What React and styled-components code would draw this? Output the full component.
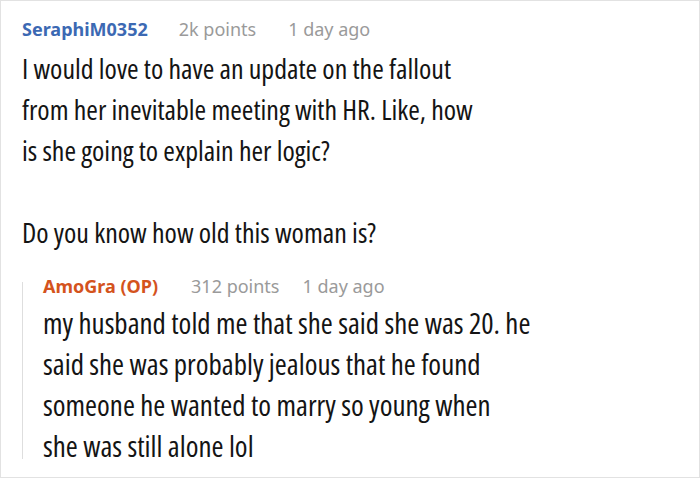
import React from "react";
import styled, { createGlobalStyle } from "styled-components";

const GlobalStyle = createGlobalStyle`
  html, body { margin: 0; padding: 0; background: #ffffff; }
  body { font-family: "Noto Sans", "Open Sans", sans-serif; }
`;

const Frame = styled.div`
  box-sizing: border-box;
  width: 700px;
  height: 478px;
  border: 1px solid #e2e2e2;
  padding: 16px 0 0 21px;
  overflow: hidden;
`;

const Meta = styled.div`
  display: flex;
  align-items: baseline;
  height: 24px;
  line-height: 24px;
  font-size: 18px;
  white-space: nowrap;
`;

const Author = styled.span`
  font-weight: 700;
  color: ${(p) => (p.$op ? "#d4531d" : "#3c69b3")};
  margin-right: ${(p) => p.$gap}px;
`;

const Stat = styled.span`
  color: #9a9a9a;
  margin-right: ${(p) => p.$gap || 0}px;
`;

const Body = styled.div`
  font-family: "Open Sans", "Noto Sans", sans-serif;
  font-stretch: 75%;
  font-size: ${(p) => p.$size || 28}px;
  line-height: 41px;
  color: #141414;
  margin-top: ${(p) => p.$top}px;
  width: ${(p) => p.$width}px;
`;

const Gap = styled.div`
  height: 41px;
`;

const Reply = styled.div`
  position: relative;
  margin-top: 21px;
  padding-left: 21px;

  &::before {
    content: "";
    position: absolute;
    left: 0;
    top: 8px;
    height: 177px;
    width: 1px;
    background: #dedede;
  }
`;

export default function App() {
  return (
    <>
      <GlobalStyle />
      <Frame>
        <Meta>
          <Author $gap={31}>SeraphiM0352</Author>
          <Stat $gap={32}>2k points</Stat>
          <Stat>1 day ago</Stat>
        </Meta>
        <Body $top={7} $width={470}>
          I would love to have an update on the fallout from her inevitable
          meeting with HR. Like, how is she going to explain her logic?
          <Gap />
          Do you know how old this woman is?
        </Body>
        <Reply>
          <Meta>
            <Author $op $gap={33}>AmoGra (OP)</Author>
            <Stat $gap={23}>312 points</Stat>
            <Stat>1 day ago</Stat>
          </Meta>
          <Body $top={4} $width={560} $size={29}>
            my husband told me that she said she was 20. he
            <br />
            said she was probably jealous that he found
            <br />
            someone he wanted to marry so young when
            <br />
            she was still alone lol
          </Body>
        </Reply>
      </Frame>
    </>
  );
}
